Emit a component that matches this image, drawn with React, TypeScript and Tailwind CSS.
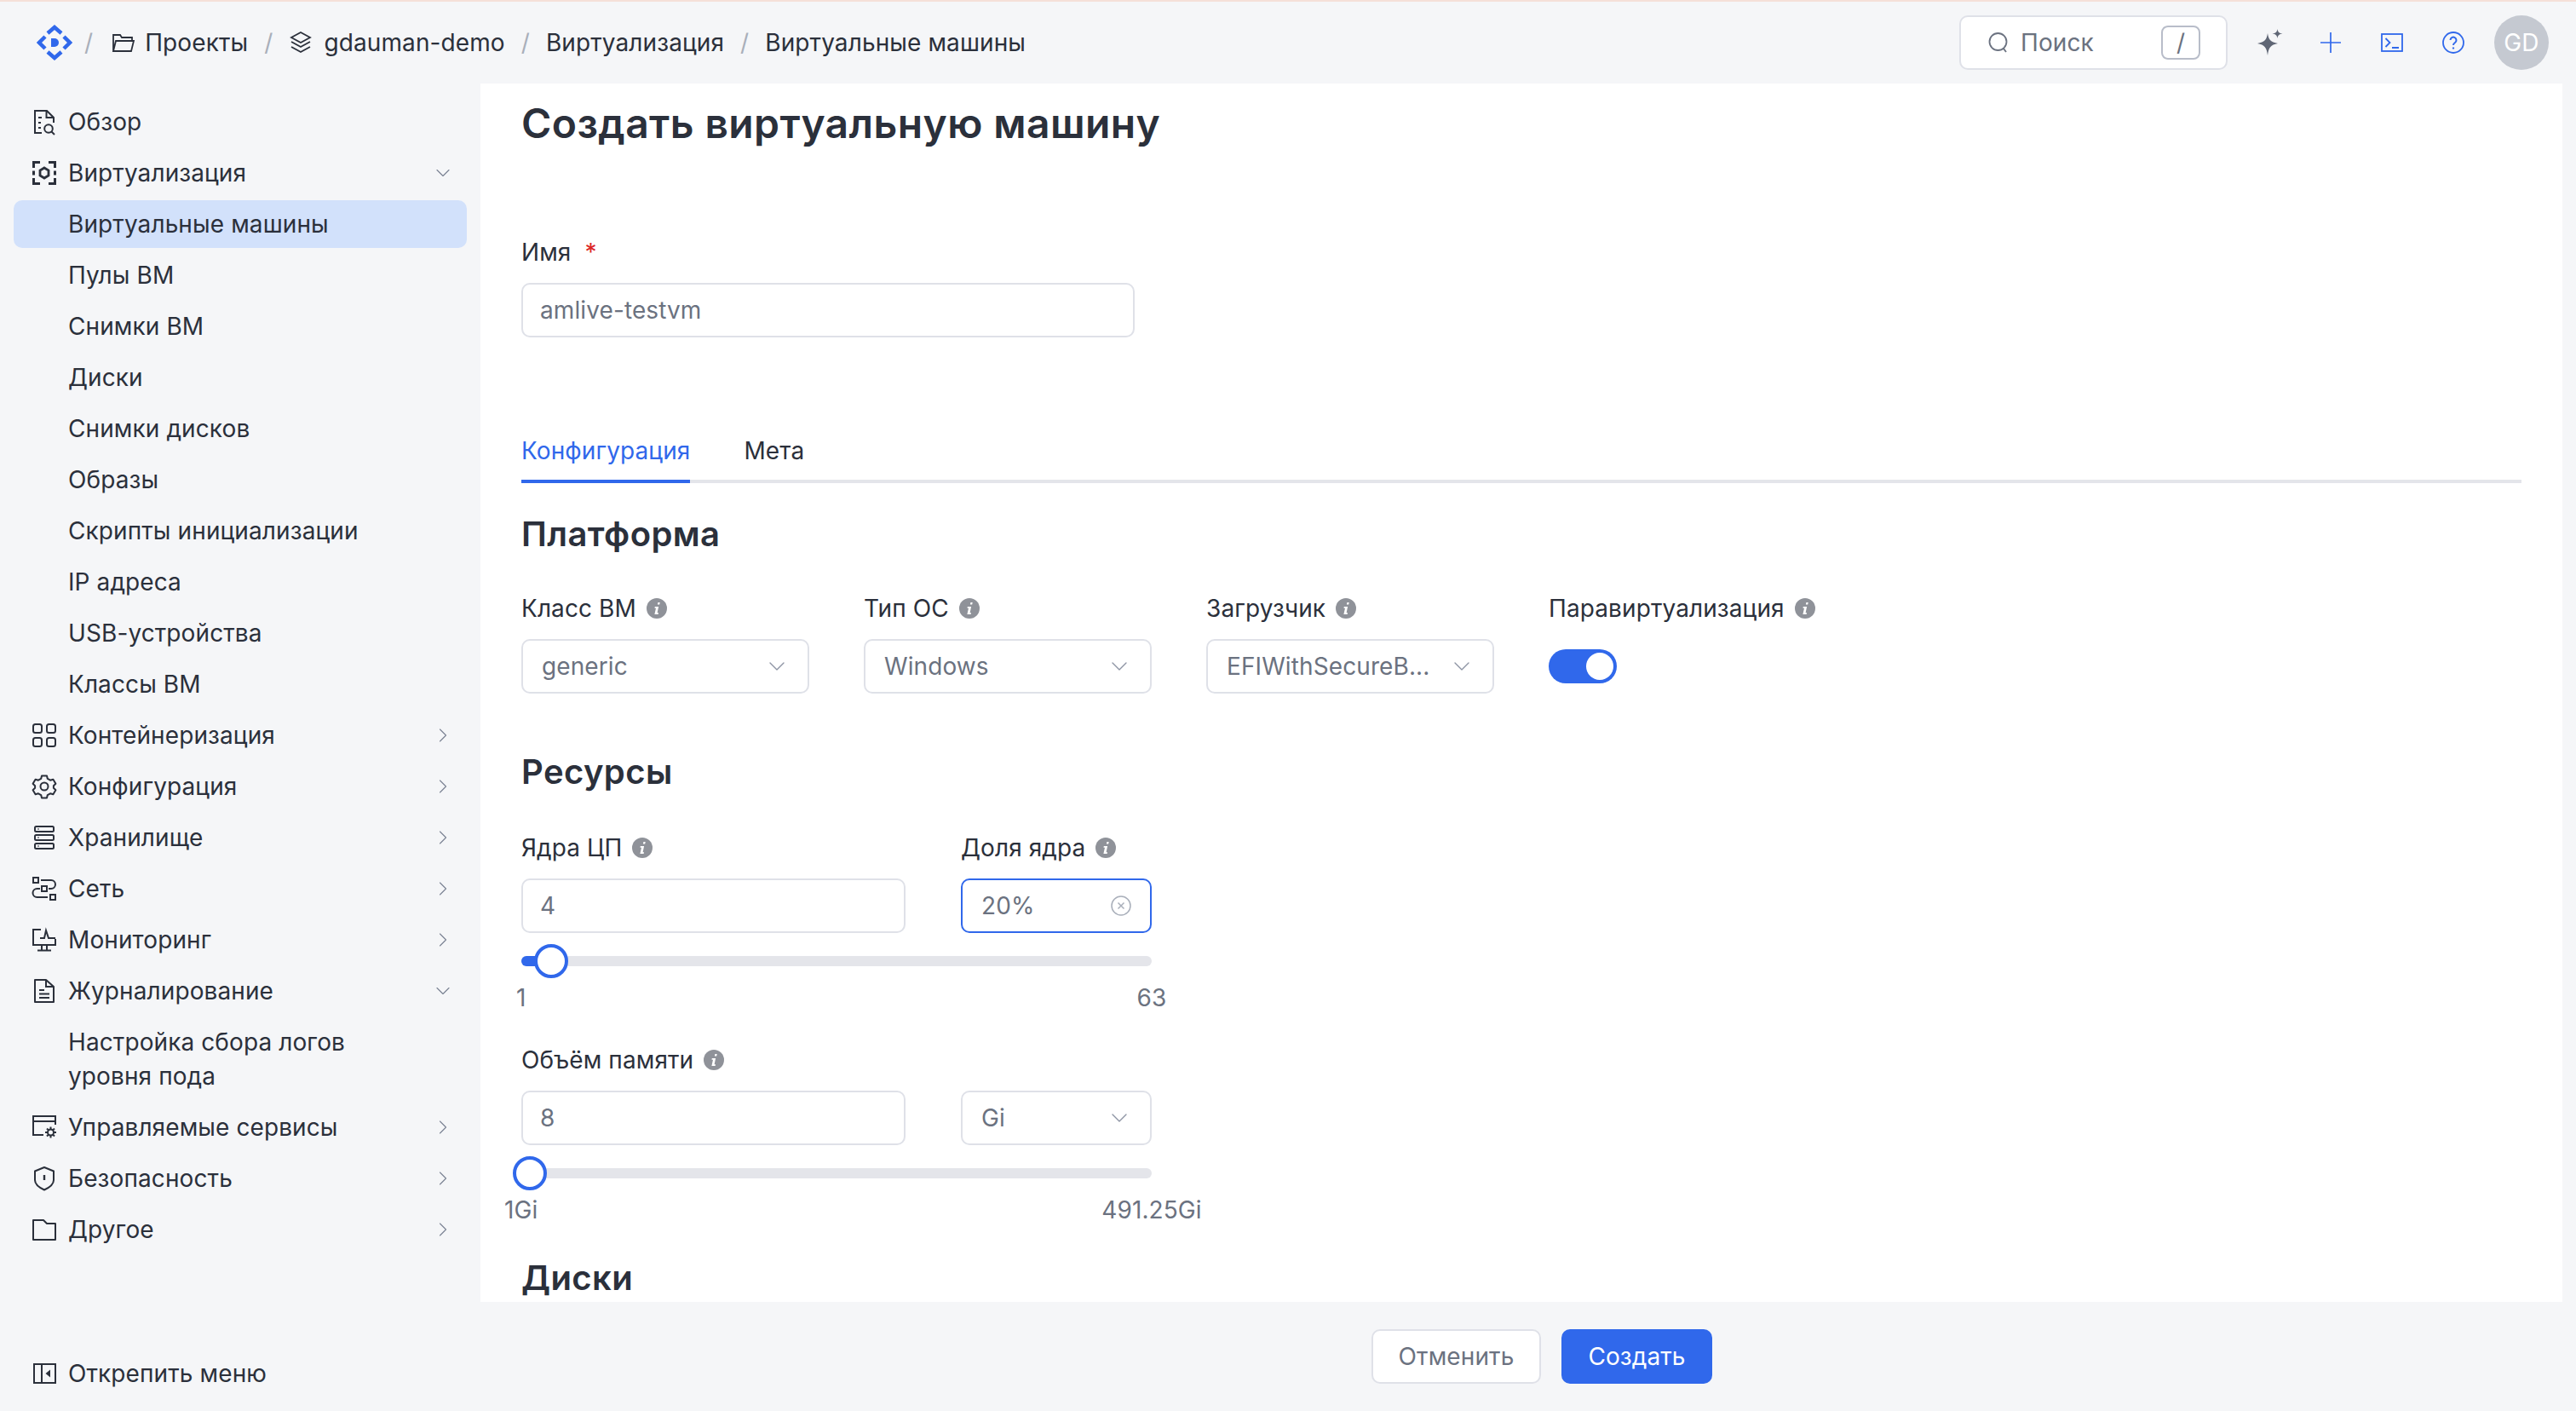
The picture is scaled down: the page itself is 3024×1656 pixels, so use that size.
import React from 'react';
import { ChevronDown, ChevronRight } from 'lucide-react';

const Svg = ({ children, className = 'w-7 h-7 text-[#2b303b]' }: { children: React.ReactNode; className?: string }) => (
  <svg viewBox="0 0 28 28" fill="none" stroke="currentColor" strokeWidth="2" className={`shrink-0 overflow-visible ${className}`}>
    {children}
  </svg>
);

const OverviewIcon = () => (
  <Svg>
    <path d="M11 27H3V1h14l8 8v6M16.500 1v8H25" />
    <path d="M7 9h4M7 15h3M7 21h3" />
    <circle cx="19" cy="22" r="4.800" />
    <path d="M22.500 25.500l3.500 3.500" />
  </Svg>
);
const VirtIcon = () => (
  <Svg>
    <g strokeWidth="3">
      <path d="M1.500 8V1.500H9M19 1.500h7.500V8M26.500 20v6.500H19M9 26.500H1.500V20" />
      <path d="M1.500 11.500v5M26.500 11.500v5" />
    </g>
    <path d="M14 8l5 3v6l-5 3-5-3v-6z" strokeWidth="2.800" />
  </Svg>
);
const GridIcon = () => (
  <Svg>
    <rect x="1" y="1" width="10" height="10" rx="2.500" />
    <rect x="17" y="1" width="10" height="10" rx="2.500" />
    <rect x="1" y="17" width="10" height="10" rx="2.500" />
    <rect x="17" y="17" width="10" height="10" rx="2.500" />
  </Svg>
);
const GearIcon = () => (
  <Svg>
    <path d="M11 1.500h6l.8 3.400 3.200 1.800 3.400-1 3 5.100-2.500 2.500v2.400l2.500 2.500-3 5.100-3.400-1-3.200 1.800-.8 3.400h-6l-.8-3.400-3.200-1.800-3.400 1-3-5.100 2.500-2.500v-2.400L.6 10.800l3-5.100 3.400 1 3.200-1.800z" strokeLinejoin="round" />
    <circle cx="14" cy="14" r="4.500" />
  </Svg>
);
const StorageIcon = () => (
  <Svg>
    <rect x="3" y="1" width="22" height="6" rx="1.500" />
    <rect x="3" y="11" width="22" height="6" rx="1.500" />
    <rect x="3" y="21" width="22" height="6" rx="1.500" />
    <path d="M6 4h2M6 14h2M6 24h2" stroke="#8f9299" />
  </Svg>
);
const NetworkIcon = () => (
  <Svg>
    <rect x="1" y="1" width="6" height="6" />
    <rect x="11" y="11" width="6" height="6" />
    <rect x="21" y="21" width="6" height="6" />
    <path d="M10 4h12a5 5 0 0 1 0 10h-3M9 14H5.500a5 5 0 0 0 0 10H18" />
  </Svg>
);
const MonitorIcon = () => (
  <Svg>
    <path d="M10 2H1v18h26v-7" />
    <path d="M9 12h5l2-9 3 9h8" />
    <path d="M11 20v6M17 20v6M6 26.500h16" />
  </Svg>
);
const LogIcon = () => (
  <Svg>
    <path d="M3 1h13l9 8v18H3z" strokeLinejoin="round" />
    <path d="M16 1v8h9M8 13h6M8 17.500h12M8 22h12" />
  </Svg>
);
const ServicesIcon = () => (
  <Svg>
    <path d="M27 11V1H1v22h12" />
    <path d="M1 7h26" />
    <circle cx="21.500" cy="20" r="3.500" />
    <path d="M21.500 13.500v3M21.500 23.500v3M15 20h3M25 20h3M17 15.500l2 2M24 22.500l2 2M17 24.500l2-2M24 17.500l2-2" />
  </Svg>
);
const ShieldIcon = () => (
  <Svg>
    <path d="M14 1l11 4.500V16c0 4.500-4.500 8.500-11 11.500C7.500 24.500 3 20.500 3 16V5.500z" strokeLinejoin="round" />
    <path d="M14 10v6" strokeWidth="2.400" />
  </Svg>
);
const FolderIcon = () => (
  <Svg>
    <path d="M1 3h12l4 4h10v19H1z" strokeLinejoin="round" />
  </Svg>
);
const UnpinIcon = () => (
  <Svg>
    <rect x="2" y="3" width="25" height="22" />
    <path d="M11 3v22" />
    <path d="M21 9.500v9l-5.500-4.500z" fill="currentColor" stroke="none" />
  </Svg>
);

const Info = () => (
  <svg viewBox="0 0 24 24" className="w-6 h-6 shrink-0">
    <circle cx="12" cy="12" r="12" fill="#8f9299" />
    <path d="M13.400 5h2.300l-.5 2.400h-2.300zM9.800 10h4.300l-1.500 7.200h1.500l-.5 1.800H9.400l1.600-7.200H9.500z" fill="#fff" />
  </svg>
);

const Caret = () => <ChevronDown strokeWidth={1} className="w-8 h-8 text-[#8d94a3] shrink-0" />;

const Sep = ({ className = 'mx-[19px]' }: { className?: string }) => (
  <span className={`text-[#a9afba] text-[28px] ${className}`}>/</span>
);

type NavItem = { label: React.ReactNode; icon?: React.ReactNode; open?: boolean; closed?: boolean; active?: boolean; tall?: boolean };

const navItems: NavItem[] = [
  { label: 'Обзор', icon: <OverviewIcon /> },
  { label: 'Виртуализация', icon: <VirtIcon />, open: true },
  { label: 'Виртуальные машины', active: true },
  { label: 'Пулы ВМ' },
  { label: 'Снимки ВМ' },
  { label: 'Диски' },
  { label: 'Снимки дисков' },
  { label: 'Образы' },
  { label: 'Скрипты инициализации' },
  { label: 'IP адреса' },
  { label: 'USB-устройства' },
  { label: 'Классы ВМ' },
  { label: 'Контейнеризация', icon: <GridIcon />, closed: true },
  { label: 'Конфигурация', icon: <GearIcon />, closed: true },
  { label: 'Хранилище', icon: <StorageIcon />, closed: true },
  { label: 'Сеть', icon: <NetworkIcon />, closed: true },
  { label: 'Мониторинг', icon: <MonitorIcon />, closed: true },
  { label: 'Журналирование', icon: <LogIcon />, open: true },
  { label: <>Настройка сбора логов<br />уровня пода</>, tall: true },
  { label: 'Управляемые сервисы', icon: <ServicesIcon />, closed: true },
  { label: 'Безопасность', icon: <ShieldIcon />, closed: true },
  { label: 'Другое', icon: <FolderIcon />, closed: true },
];

function NavRow({ item }: { item: NavItem }) {
  return (
    <div
      className={`flex items-center pl-[22px] pr-[14px] rounded-[10px] text-[28px] leading-[40px] text-[#2b303b] ${
        item.tall ? 'h-[96px]' : 'h-14'
      } ${item.active ? 'bg-[#d2e1fb]' : ''}`}
    >
      <span className="w-[42px] shrink-0 flex items-center">{item.icon}</span>
      <span className="flex-1">{item.label}</span>
      {item.open && <ChevronDown strokeWidth={1} className="w-7 h-7 text-[#7b8494]" />}
      {item.closed && <ChevronRight strokeWidth={1} className="w-7 h-7 text-[#7b8494]" />}
    </div>
  );
}

function Header() {
  return (
    <header className="h-[96px] shrink-0 flex items-center pl-[43px] pr-8 text-[28px] text-[#2b303b]">
      <svg viewBox="0 0 42 42" className="w-[42px] h-[42px] shrink-0 text-[#3068eb]" fill="none" stroke="currentColor" strokeWidth="4.500">
        <path d="M13 10l8-7 8 7M13 32l8 7 8-7M10 14l-7 7 7 7M32 14l7 7-7 7" />
        <path d="M17 16h4a5 5 0 0 1 0 10h-4z" fill="currentColor" stroke="none" />
      </svg>
      <Sep className="ml-[14px] mr-[22px]" />
      <svg viewBox="0 0 28 28" fill="none" stroke="currentColor" strokeWidth="1.800" className="w-7 h-7 mr-[11px]">
        <path d="M2 24V5h8l2 3h12v4M2 24l3-12h21l-3 12z" />
      </svg>
      <span>Проекты</span>
      <Sep />
      <svg viewBox="0 0 28 28" fill="none" stroke="currentColor" strokeWidth="1.800" className="w-7 h-7 mr-[13px]">
        <path d="M14 2l11 6-11 6L3 8zM3 13l11 6 11-6M3 19l11 6 11-6" />
      </svg>
      <span>gdauman-demo</span>
      <Sep />
      <span>Виртуализация</span>
      <Sep />
      <span>Виртуальные машины</span>

      <div className="ml-auto w-[315px] h-16 rounded-[10px] border-2 border-[#dfe1e8] bg-white flex items-center pl-[30px] pr-[30px] text-[#6b7280]">
        <svg viewBox="0 0 28 28" fill="none" stroke="currentColor" strokeWidth="1.800" className="w-7 h-7 mr-[12px] text-[#6b7280]">
          <circle cx="13.500" cy="13" r="10" />
          <path d="M20 21l3 4" />
        </svg>
        <span className="flex-1">Поиск</span>
        <span className="w-[46px] h-[40px] rounded-[8px] border-2 border-[#b8bdc9] flex items-center justify-center">/</span>
      </div>
      <svg viewBox="0 0 32 32" className="w-8 h-8 ml-[34px] text-[#5f6675]" fill="currentColor">
        <path d="M13 5c1 7.500 3.500 10.500 12 12-8.500 1.500-11 5-12 14-1-9-3.500-12.500-12-14 8.500-1.500 11-4.500 12-12z" />
        <path d="M24.500 0c.5 3.500 2 5 6 5.500-4 .5-5.500 2-6 5.500-.5-3.500-2-5-6-5.500 4-.5 5.500-2 6-5.500z" />
      </svg>
      <svg viewBox="0 0 28 28" fill="none" stroke="currentColor" strokeWidth="1.700" className="w-7 h-7 ml-[41px] text-[#3068eb]">
        <path d="M14 2v24M2 14h24" />
      </svg>
      <svg viewBox="0 0 28 28" fill="none" stroke="currentColor" strokeWidth="1.800" className="w-7 h-7 ml-[44px] text-[#3068eb]">
        <rect x="2" y="4" width="24" height="20" />
        <path d="M6.500 9l5 5-5 5M14 20h8" />
      </svg>
      <svg viewBox="0 0 28 28" fill="none" stroke="currentColor" strokeWidth="1.800" className="w-7 h-7 ml-[44px] text-[#3068eb]">
        <circle cx="14" cy="14" r="12" />
        <path d="M10.500 11a3.500 3.500 0 1 1 5.500 3c-1.300.9-2 1.500-2 3" strokeWidth="2" />
        <path d="M14 19.500v2" strokeWidth="2.200" />
      </svg>
      <div className="ml-[34px] w-16 h-16 rounded-full bg-[#c5c9d1] text-white flex items-center justify-center">GD</div>
    </header>
  );
}

const Label = ({ children }: { children: React.ReactNode }) => (
  <div className="h-10 flex items-center gap-3 text-[28px] text-[#2b303b] whitespace-nowrap">
    <span>{children}</span>
    <Info />
  </div>
);

const boxClass = 'h-16 rounded-[10px] border-2 bg-white flex items-center text-[28px] text-[#6b7280]';

const Field = ({ value, className }: { value: string; className: string }) => (
  <div className={`${boxClass} border-[#dfe1e8] pl-5 pr-5 ${className}`}>{value}</div>
);

const Select = ({ value, className }: { value: string; className: string }) => (
  <div className={`${boxClass} border-[#dfe1e8] pl-[22px] pr-[20px] justify-between ${className}`}>
    <span className="whitespace-nowrap">{value}</span>
    <Caret />
  </div>
);

function Slider({ fill, thumb, min, max, minClass }: { fill: string; thumb: string; min: string; max: string; minClass: string }) {
  return (
    <div className="w-[740px] mt-[27px]">
      <div className="relative h-3 rounded-full bg-[#e4e5ea]">
        <div className={`absolute left-0 top-0 bottom-0 rounded-l-full bg-[#3068eb] ${fill}`} />
        <div className={`absolute top-[-14px] w-10 h-10 rounded-full bg-white border-[4px] border-[#3068eb] ${thumb}`} />
      </div>
      <div className="relative h-10 mt-[17px] text-[28px] leading-10 text-[#6b7280]">
        <span className={`absolute top-0 ${minClass}`}>{min}</span>
        <span className="absolute top-0 right-0 translate-x-1/2">{max}</span>
      </div>
    </div>
  );
}

const SectionTitle = ({ children, className }: { children: React.ReactNode; className: string }) => (
  <h2 className={`text-[40px] leading-[52px] font-semibold tracking-[0.4px] text-[#2b303b] ${className}`}>{children}</h2>
);

export default function App() {
  return (
    <div className="w-[3024px] h-[1656px] flex flex-col overflow-hidden bg-[#f5f6f8] font-['Inter',sans-serif] tracking-[0.1px]">
      <div className="h-[2px] bg-[#f5e0d8] shrink-0" />
      <Header />
      <div className="flex-1 flex min-h-0">
        <aside className="w-[564px] shrink-0 flex flex-col px-4 pt-[17px] pb-4">
          <nav className="flex flex-col gap-1">
            {navItems.map((item, idx) => (
              <NavRow key={idx} item={item} />
            ))}
          </nav>
          <div className="mt-auto">
            <NavRow item={{ label: 'Открепить меню', icon: <UnpinIcon /> }} />
          </div>
        </aside>

        <main className="flex-1 min-w-0 flex flex-col">
          <div className="flex-1 min-h-0 overflow-hidden bg-white mr-4 pl-12 pr-12 pt-[19px]">
            <h1 className="text-[48px] leading-[56px] font-semibold tracking-[0.4px] text-[#2b303b]">Создать виртуальную машину</h1>

            <div className="mt-[103px] h-10 flex items-center text-[28px] text-[#2b303b]">
              Имя <span className="ml-4 text-[#dc2626]">*</span>
            </div>
            <Field value="amlive-testvm" className="w-[720px] mt-4" />

            <div className="mt-[103px] flex gap-[63px] border-b-4 border-[#e4e5ea] h-[68px] text-[28px]">
              <div className="text-[#3068eb] border-b-4 border-[#3068eb] h-[68px] leading-[60px]">Конфигурация</div>
              <div className="text-[#2b303b] leading-[60px]">Мета</div>
            </div>

            <SectionTitle className="mt-[34px]">Платформа</SectionTitle>
            <div className="mt-[41px] flex gap-[64px]">
              {[
                ['Класс ВМ', 'generic'],
                ['Тип ОС', 'Windows'],
                ['Загрузчик', 'EFIWithSecureB...'],
              ].map(([label, value]) => (
                <div key={label} className="w-[338px]">
                  <Label>{label}</Label>
                  <Select value={value} className="w-full mt-4" />
                </div>
              ))}
              <div>
                <Label>Паравиртуализация</Label>
                <div className="mt-[28px] w-20 h-10 rounded-full bg-[#3068eb] flex items-center justify-end pr-1">
                  <div className="w-8 h-8 rounded-full bg-white" />
                </div>
              </div>
            </div>

            <SectionTitle className="mt-[66px]">Ресурсы</SectionTitle>
            <div className="mt-[43px] flex gap-[65px]">
              <div className="w-[451px]">
                <Label>Ядра ЦП</Label>
                <Field value="4" className="w-full mt-4" />
              </div>
              <div className="w-[224px]">
                <Label>Доля ядра</Label>
                <div className={`${boxClass} border-[#3068eb] w-full mt-4 pl-[22px] pr-[22px] justify-between`}>
                  <span>20%</span>
                  <svg viewBox="0 0 24 24" fill="none" stroke="#a9afba" strokeWidth="1.500" className="w-6 h-6">
                    <circle cx="12" cy="12" r="11" />
                    <path d="M8.500 8.500l7 7M15.500 8.500l-7 7" />
                  </svg>
                </div>
              </div>
            </div>
            <Slider fill="w-4" thumb="left-[15px]" min="1" max="63" minClass="left-[-6px]" />

            <div className="mt-[33px]">
              <Label>Объём памяти</Label>
              <div className="mt-4 flex gap-[65px]">
                <Field value="8" className="w-[451px]" />
                <Select value="Gi" className="w-[224px]" />
              </div>
            </div>
            <Slider fill="w-0" thumb="left-[-10px]" min="1Gi" max="491.25Gi" minClass="left-[-20px]" />

            <SectionTitle className="mt-[34px]">Диски</SectionTitle>
          </div>

          <footer className="h-[128px] shrink-0 flex items-start justify-center gap-6 pl-8 pt-8">
            <div className="w-[199px] h-16 rounded-[10px] border-2 border-[#dfe1e8] bg-white flex items-center justify-center text-[28px] text-[#6b7280]">
              Отменить
            </div>
            <div className="w-[177px] h-16 rounded-[10px] bg-[#3068eb] flex items-center justify-center text-[28px] text-white">
              Создать
            </div>
          </footer>
        </main>
      </div>
    </div>
  );
}
